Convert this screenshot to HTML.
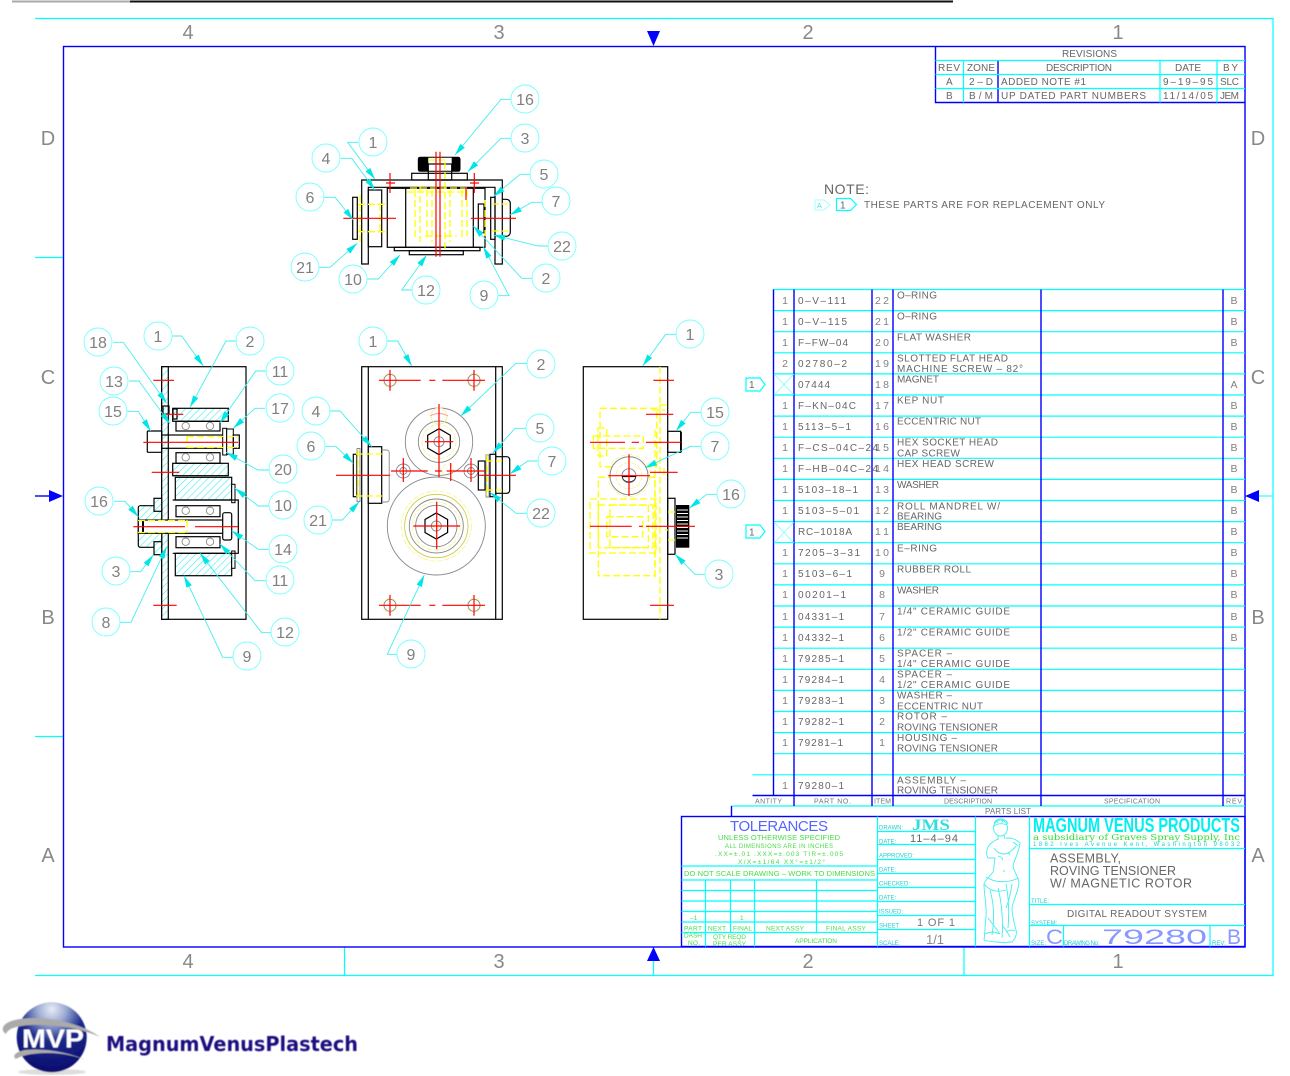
<!DOCTYPE html>
<html><head><meta charset="utf-8"><style>
html,body{margin:0;padding:0;background:#fff}
svg{display:block;font-family:"Liberation Sans",sans-serif}
.c{fill:none;stroke:#00ffff;stroke-width:1.2}
.bl{fill:none;stroke:#0000ff;stroke-width:1.4}
.k{fill:none;stroke:#000;stroke-width:1.2}
.kh{fill:url(#h);stroke:#000;stroke-width:1.2}
.g{fill:none;stroke:#888;stroke-width:.9}
.y{fill:none;stroke:#ffff00;stroke-width:1.3;stroke-dasharray:7 3}
.yc{fill:none;stroke:#f6f68a;stroke-width:.8;stroke-dasharray:5 2}
.r{fill:none;stroke:#ff0000;stroke-width:1.2}
.b{fill:#fff;stroke:#7ff;stroke-width:.9}
.l{fill:none;stroke:#44eeee;stroke-width:.9;marker-end:url(#a)}
.n{font-size:16px;fill:#808080;text-anchor:middle}
.z{font-size:20px;fill:#888;text-anchor:middle}
.t{font-size:10px;fill:#666}
.m{font-size:10.5px;fill:#808080;text-anchor:middle}
.s{font-size:8px;fill:#777}
.gr{font-size:6.5px;fill:#44dd44}
.cy{font-size:6px;fill:#22cccc}
</style></head><body>
<svg width="1290" height="1076" viewBox="0 0 1290 1076" xmlns="http://www.w3.org/2000/svg">
<defs>
<pattern id="h" width="5" height="5" patternUnits="userSpaceOnUse" patternTransform="rotate(45)"><rect width="5" height="5" fill="#fff"/><line x1="0" y1="0" x2="0" y2="5" stroke="#44eeee" stroke-width="1.2"/></pattern>
<marker id="a" markerUnits="userSpaceOnUse" markerWidth="13" markerHeight="7" refX="12" refY="3.5" orient="auto"><path d="M0 .5L12 3.500L0 6.500z" fill="#00e5e5"/></marker>
<radialGradient id="sp" cx=".5" cy=".1" r=".95"><stop offset="0" stop-color="#e8edf5"/><stop offset=".22" stop-color="#9aa9d2"/><stop offset=".48" stop-color="#1c2a8c"/><stop offset="1" stop-color="#08086a"/></radialGradient>
<filter id="bf"><feGaussianBlur stdDeviation=".6"/></filter>
</defs>

<rect x="12" y="0.5" width="118" height="2" fill="#aaa"/><rect x="130" y="0.5" width="823" height="2" fill="#111"/>

<path class="c" d="M35 18.500H1273V975.500H35M35 257.500H63.500M35 736.500H63.500M344.500 947V975.500M964 947V975.500M653.500 947V975.500"/>
<rect class="bl" x="63.500" y="46.500" width="1181.500" height="900.500"/>
<path d="M647 31h13l-6.500 15z" fill="#0000ff"/><path d="M647 961h13l-6.500-14z" fill="#0000ff"/>
<path d="M35 496H49" stroke="#0000ff" stroke-width="1.400"/><path d="M49 490v12l14-6z" fill="#0000ff"/>
<path d="M1245 496l14-6v12z" fill="#0000ff"/><path d="M1259 496H1273" stroke="#00ffff"/>

<g class="z">
<text x="188" y="39">4</text><text x="499" y="39">3</text><text x="808" y="39">2</text><text x="1118" y="39">1</text>
<text x="188" y="968">4</text><text x="499" y="968">3</text><text x="808" y="968">2</text><text x="1118" y="968">1</text>
<text x="48" y="145">D</text><text x="48" y="384">C</text><text x="48" y="624">B</text><text x="48" y="862">A</text>
<text x="1258" y="145">D</text><text x="1258" y="384">C</text><text x="1258" y="624">B</text><text x="1258" y="862">A</text>
</g>

<path class="bl" d="M935.500 46.500V102.500H1245M998 60.500V102.500"/>
<path class="c" d="M935.500 60.500H1245M935.500 74.500H1245M935.500 88.500H1245M963.500 60.500V102.500M1160 60.500V102.500M1217 60.500V102.500"/>
<g class="t" style="font-size:10px">
<text x="1062" y="57" textLength="55">REVISIONS</text>
<text x="938" y="71" textLength="22">REV</text><text x="967" y="71" textLength="28">ZONE</text><text x="1046" y="71" textLength="66">DESCRIPTION</text><text x="1175" y="71" textLength="26">DATE</text><text x="1223" y="71" textLength="15">BY</text>
<text x="946" y="85">A</text><text x="969" y="85" textLength="24">2–D</text><text x="1001" y="85" textLength="85">ADDED NOTE #1</text><text x="1163" y="85" textLength="50">9–19–95</text><text x="1220" y="85" textLength="19">SLC</text>
<text x="946" y="99">B</text><text x="969" y="99" textLength="24">B/M</text><text x="1001" y="99" textLength="145">UP DATED PART NUMBERS</text><text x="1163" y="99" textLength="50">11/14/05</text><text x="1220" y="99" textLength="19">JEM</text>
</g>

<text x="824" y="194" textLength="45" style="font-size:14px" fill="#666">NOTE:</text>
<path d="M815 200h9l6 5-6 5h-9z" fill="none" stroke="#8ff" stroke-width=".8"/><text x="817" y="208" style="font-size:7px" fill="#5dd">A</text>
<path class="c" d="M836.500 198.500h14l6 6-6 6h-14z"/><text x="840" y="208.500" class="t">1</text>
<text x="864" y="208" class="t" textLength="241">THESE PARTS ARE FOR REPLACEMENT ONLY</text>

<path class="c" d="M773 289.500H1245M773 310.600H1245M773 331.700H1245M773 352.800H1245M773 373.900H1245M773 395H1245M773 416.100H1245M773 437.200H1245M773 458.300H1245M773 479.400H1245M773 500.500H1245M773 521.600H1245M773 542.700H1245M773 563.800H1245M773 584.900H1245M773 606H1245M773 627.100H1245M773 648.200H1245M773 669.300H1245M773 690.400H1245M773 711.500H1245M773 732.600H1245M773 753.700H1245M752.500 774.800H1245M731.500 806H1245"/>
<path class="bl" d="M752.500 795.500H1245M773.500 289.500V795.500M794 289.500V806M872 289.500V806M893 289.500V806M1041 289.500V806M1223 289.500V806M731.500 806V816"/>
<path d="M774 374l20 21M794 374l-20 21M774 522l20 21M794 522l-20 21" stroke="#7ff" stroke-width=".8"/>
<path class="c" d="M746 378h14l5 6.500-5 6.500h-14zM746 525h14l5 6.500-5 6.500h-14z"/>
<text x="749" y="388" class="t">1</text><text x="749" y="535.500" class="t">1</text>

<g class="m">
<text x="785" y="304">1</text><text x="785" y="325">1</text><text x="785" y="346">1</text><text x="785" y="367">2</text><text x="785" y="409">1</text><text x="785" y="430">1</text><text x="785" y="451">1</text><text x="785" y="472">1</text><text x="785" y="493">1</text><text x="785" y="514">1</text><text x="785" y="556">1</text><text x="785" y="577">1</text><text x="785" y="598">1</text><text x="785" y="620">1</text><text x="785" y="641">1</text><text x="785" y="662">1</text><text x="785" y="683">1</text><text x="785" y="704">1</text><text x="785" y="725">1</text><text x="785" y="746">1</text><text x="785" y="789">1</text>
<text x="882" y="304" textLength="14">22</text><text x="882" y="325" textLength="14">21</text><text x="882" y="346" textLength="14">20</text><text x="882" y="367" textLength="14">19</text><text x="882" y="388" textLength="14">18</text><text x="882" y="409" textLength="14">17</text><text x="882" y="430" textLength="14">16</text><text x="882" y="451" textLength="14">15</text><text x="882" y="472" textLength="14">14</text><text x="882" y="493" textLength="14">13</text><text x="882" y="514" textLength="14">12</text><text x="882" y="535" textLength="14">11</text><text x="882" y="556" textLength="14">10</text><text x="882" y="577">9</text><text x="882" y="598">8</text><text x="882" y="620">7</text><text x="882" y="641">6</text><text x="882" y="662">5</text><text x="882" y="683">4</text><text x="882" y="704">3</text><text x="882" y="725">2</text><text x="882" y="746">1</text>
<text x="1234" y="304">B</text><text x="1234" y="325">B</text><text x="1234" y="346">B</text><text x="1234" y="388">A</text><text x="1234" y="409">B</text><text x="1234" y="430">B</text><text x="1234" y="451">B</text><text x="1234" y="472">B</text><text x="1234" y="493">B</text><text x="1234" y="514">B</text><text x="1234" y="535">B</text><text x="1234" y="556">B</text><text x="1234" y="577">B</text><text x="1234" y="598">B</text><text x="1234" y="620">B</text><text x="1234" y="641">B</text>
</g>
<g class="t">
<text x="798" y="304" textLength="48">0–V–111</text><text x="798" y="325" textLength="49">0–V–115</text><text x="798" y="346" textLength="50">F–FW–04</text><text x="798" y="367" textLength="49">02780–2</text><text x="798" y="388" textLength="32">07444</text><text x="798" y="409" textLength="58">F–KN–04C</text><text x="798" y="430" textLength="53">5113–5–1</text><text x="798" y="451" textLength="80">F–CS–04C–24</text><text x="798" y="472" textLength="80">F–HB–04C–24</text><text x="798" y="493" textLength="60">5103–18–1</text><text x="798" y="514" textLength="61">5103–5–01</text><text x="798" y="535" textLength="54">RC–1018A</text><text x="798" y="556" textLength="62">7205–3–31</text><text x="798" y="577" textLength="54">5103–6–1</text><text x="798" y="598" textLength="48">00201–1</text><text x="798" y="620" textLength="46">04331–1</text><text x="798" y="641" textLength="46">04332–1</text><text x="798" y="662" textLength="46">79285–1</text><text x="798" y="683" textLength="46">79284–1</text><text x="798" y="704" textLength="46">79283–1</text><text x="798" y="725" textLength="46">79282–1</text><text x="798" y="746" textLength="45">79281–1</text><text x="798" y="789" textLength="46">79280–1</text>
<text x="897" y="298.500" textLength="40">O–RING</text><text x="897" y="319.500" textLength="40">O–RING</text><text x="897" y="340.500" textLength="74">FLAT WASHER</text>
<text x="897" y="361.500" textLength="111">SLOTTED FLAT HEAD</text><text x="897" y="372" textLength="126">MACHINE SCREW – 82°</text>
<text x="897" y="382.500" textLength="42">MAGNET</text><text x="897" y="403.500" textLength="47">KEP NUT</text><text x="897" y="424.500" textLength="84">ECCENTRIC NUT</text>
<text x="897" y="445.500" textLength="101">HEX SOCKET HEAD</text><text x="897" y="456.500" textLength="63">CAP SCREW</text><text x="897" y="467" textLength="97">HEX HEAD SCREW</text>
<text x="897" y="488" textLength="42">WASHER</text><text x="897" y="509.500" textLength="103">ROLL MANDREL W/</text><text x="897" y="519.500" textLength="45">BEARING</text><text x="897" y="530" textLength="45">BEARING</text>
<text x="897" y="551.500" textLength="40">E–RING</text><text x="897" y="572.500" textLength="74">RUBBER ROLL</text><text x="897" y="593.500" textLength="42">WASHER</text>
<text x="897" y="614.500" textLength="113">1/4" CERAMIC GUIDE</text><text x="897" y="635.500" textLength="113">1/2" CERAMIC GUIDE</text>
<text x="897" y="656.500" textLength="55">SPACER –</text><text x="897" y="667" textLength="113">1/4" CERAMIC GUIDE</text>
<text x="897" y="677.500" textLength="55">SPACER –</text><text x="897" y="688" textLength="113">1/2" CERAMIC GUIDE</text>
<text x="897" y="698.500" textLength="55">WASHER –</text><text x="897" y="709.500" textLength="86">ECCENTRIC NUT</text>
<text x="897" y="719.500" textLength="50">ROTOR –</text><text x="897" y="730.500" textLength="101">ROVING TENSIONER</text>
<text x="897" y="741" textLength="60">HOUSING –</text><text x="897" y="751.500" textLength="101">ROVING TENSIONER</text>
<text x="897" y="783.500" textLength="69">ASSEMBLY –</text><text x="897" y="793.500" textLength="101">ROVING TENSIONER</text>
</g>
<g class="s">
<text x="755" y="803.500" textLength="27" style="font-size:7px">ANTITY</text><text x="814" y="803.500" textLength="37" style="font-size:7px">PART NO.</text><text x="874" y="803.500" textLength="17" style="font-size:7px">ITEM</text><text x="944" y="803.500" textLength="48" style="font-size:7px">DESCRIPTION</text><text x="1104" y="803.500" textLength="56" style="font-size:7px">SPECIFICATION</text><text x="1226" y="803.500" textLength="16" style="font-size:7px">REV</text>
<text x="985" y="814" textLength="46">PARTS LIST</text>
</g>

<rect class="bl" x="681.500" y="816.500" width="563.500" height="130"/>
<path class="c" d="M877.500 816.500V946.500M975.500 816.500V946.500M681.500 866H877.500M681.500 880H877.500M681.500 890.500H877.500M681.500 901H877.500M681.500 911.500H877.500M681.500 922H877.500M681.500 932.500H877.500M705.500 880V946.500M730.500 880V932.500M754.500 880V946.500M816.500 880V932.500M877.500 831.500H975.500M877.500 844.500H975.500M877.500 859.500H975.500M877.500 873.500H975.500M877.500 887.500H975.500M877.500 901.500H975.500M877.500 915.500H975.500M877.500 929.500H975.500M1029.500 816.500V946.500M1029.500 848.500H1245M1029.500 904.500H1245M1029.500 925.500H1245M1063.500 925.500V946.500M1210 925.500V946.500"/>
<text x="730" y="831" textLength="98" style="font-size:15px" fill="#5566ff">TOLERANCES</text>
<g class="gr">
<text x="718" y="840" textLength="122" style="font-size:7.500px">UNLESS OTHERWISE SPECIFIED</text>
<text x="725" y="848" textLength="108" style="font-size:6px">ALL DIMENSIONS ARE IN INCHES</text>
<text x="715" y="856" textLength="128" style="font-size:6.500px">.XX=±.01   .XXX=±.003   TIR=±.005</text>
<text x="738" y="864" textLength="87" style="font-size:6.500px">X/X=±1/64   XX°=±1/2°</text>
<text x="684" y="876" textLength="191" style="font-size:7.500px">DO NOT SCALE DRAWING – WORK TO DIMENSIONS</text>
<text x="690" y="920">–1</text><text x="740" y="920">1</text>
<text x="684" y="930.500" textLength="18">PART</text><text x="708" y="930.500" textLength="18">NEXT</text><text x="733" y="930.500" textLength="19">FINAL</text><text x="766" y="930.500" textLength="38">NEXT ASSY</text><text x="826" y="930.500" textLength="40">FINAL ASSY</text>
<text x="684" y="937.500" textLength="18">DASH</text><text x="688" y="945" textLength="12">NO.</text>
<text x="713" y="939" textLength="33">QTY REQD</text><text x="713" y="946" textLength="33">PER ASSY</text><text x="795" y="943" textLength="42">APPLICATION</text>
</g>
<g class="cy">
<text x="879" y="829.500">DRAWN:</text><text x="879" y="843.500">DATE:</text><text x="879" y="857.500">APPROVED:</text><text x="879" y="871.500">DATE:</text><text x="879" y="885.500">CHECKED:</text><text x="879" y="899.500">DATE:</text><text x="879" y="913.500">ISSUED:</text><text x="879" y="927.500">SHEET</text><text x="879" y="945">SCALE:</text>
<text x="1031" y="903">TITLE:</text><text x="1031" y="925">SYSTEM:</text><text x="1031" y="945">SIZE:</text><text x="1064" y="945" textLength="35">DRAWING No:</text><text x="1212" y="945">REV:</text>
</g>
<text x="912" y="830" textLength="38" lengthAdjust="spacingAndGlyphs" style="font-size:16px;font-family:'Liberation Serif',serif;font-weight:bold" fill="#33dddd">JMS</text>
<text x="910" y="842" textLength="48" style="font-size:11px" fill="#666">11–4–94</text>
<text x="917" y="926" textLength="38" style="font-size:11px" fill="#777">1 OF 1</text>
<text x="926" y="944" textLength="18" style="font-size:13px" fill="#888">1/1</text>
<text x="1033" y="832" textLength="207" lengthAdjust="spacingAndGlyphs" style="font-size:20px;font-weight:bold" fill="#00f0f0">MAGNUM VENUS PRODUCTS</text>
<text x="1033" y="840" textLength="207" lengthAdjust="spacingAndGlyphs" style="font-size:8px;font-family:'DejaVu Serif',serif" fill="#33dd33">a subsidiary of Graves Spray Supply, Inc</text>
<text x="1033" y="846" textLength="207" style="font-size:6px" fill="#22cccc">1882 Ives Avenue  Kent, Washington  98032</text>
<g style="font-size:12.500px" fill="#666">
<text x="1050" y="862.500" textLength="71">ASSEMBLY,</text><text x="1050" y="875" textLength="126">ROVING TENSIONER</text><text x="1050" y="887.500" textLength="142">W/ MAGNETIC ROTOR</text>
</g>
<text x="1067" y="917" textLength="140" style="font-size:10px" fill="#666">DIGITAL READOUT SYSTEM</text>
<g style="font-size:21px" fill="#8899ff">
<text x="1046" y="944" textLength="17" lengthAdjust="spacingAndGlyphs">C</text><text x="1102" y="944" textLength="105" lengthAdjust="spacingAndGlyphs">79280</text><text x="1227" y="944" textLength="14" lengthAdjust="spacingAndGlyphs">B</text>
</g>

<g fill="none" stroke="#44eeee" stroke-width=".9">
<ellipse cx="1000.500" cy="828" rx="7" ry="8"/><path d="M994 823q3-5 8-4t6 5M994 826q6-4 13-1M996 820l2 3M1003 819l-1 4M998 836l0 4M1004 835l1 4"/>
<path d="M998 839C992 842 988 845 987 850C986 854 987 856 988 858L995 858C994 864 994 869 993 872C990 876 985 880 984 884C984 895 987 905 986 917C985 925 985 933 984 940C990 942 1005 943 1012 942C1016 938 1017 933 1016 930C1014 922 1012 916 1012 908C1014 898 1018 892 1019 883C1018 876 1014 872 1013 866C1015 858 1019 852 1020 843C1015 838 1010 838 1006 838"/>
<path d="M986 877q14 9 33 1M984 884q8 10 22 6M990 890q6 20 2 45M998 888q6 24 4 50M1006 884q4 20 2 44M1012 884q-2 14-6 24M988 918l12 16M1002 925q5 6 8 12M994 848q4 6 10 6t12-8M998 856q6 2 4 4M1008 852l2 3M1003 871h2M1013 842l5 4M985 934q8-4 14 0M1006 932q4-3 9-1"/>
</g>

<!-- TOP VIEW -->
<g>
<path class="k" d="M361.700 264V180H502.300V264H495V187.300H368.300V264Z"/>
<rect class="k" x="368.300" y="190" width="13.400" height="56.700"/>
<rect class="k" x="352.700" y="197.300" width="4.600" height="42"/>
<rect class="k" x="387.300" y="188.300" width="97.700" height="59"/><path class="k" d="M405.700 188.300V247.300M473.300 188.300V247.300"/>
<rect class="k" x="394.300" y="247.300" width="85.700" height="3.400"/><rect class="k" x="409.300" y="250.700" width="54" height="4"/>
<rect x="418.300" y="157.300" width="41.700" height="14" rx="2" fill="#fff" stroke="#000"/><rect x="418.300" y="157.300" width="10" height="14" fill="#000"/><rect x="451.700" y="157.300" width="8.300" height="14" fill="#000"/>
<rect class="k" x="411.700" y="173.300" width="55.600" height="6.700"/><rect class="k" x="428.300" y="164" width="23.400" height="16"/>
<rect class="k" x="478.300" y="204" width="5.700" height="28.700"/><rect class="k" x="490.700" y="197.300" width="4.300" height="42"/>
<path class="k" d="M502.300 199.300h4a4 4 0 0 1 4 4v29a4 4 0 0 1-4 4h-4"/>
<path class="y" d="M358 204.300H388M358 231.700H388M360 195V243M415 190V240M420 186V242M432 190V242M445 162V252M450 190V242M462 190V238M427 190V240M410 188h58M428 160h20M407 192h58M425 236h32M492 204h16M492 231h16M485 200v36M467 190V236M380 204v28"/>
<path class="r" d="M343.300 218.300H396M471 218.300H516M436 151.700V256.700M440 151.700V256.700M390 173V193M474.300 173V193M466 187V200M386 183H395M470 183H479"/>
</g>

<!-- SIDE VIEW -->
<g>
<rect class="k" x="161.700" y="366.700" width="84.300" height="252.600"/>
<rect class="kh" x="161.700" y="366.700" width="6.600" height="252.600"/>
<rect class="kh" x="172.700" y="408.300" width="55.600" height="13"/><rect class="kh" x="172.700" y="463.300" width="55.600" height="12.400"/>
<rect class="k" x="176" y="421.300" width="44" height="9.700" fill="#fff"/><rect class="k" x="176" y="452.700" width="44" height="10.600" fill="#fff"/>
<rect class="k" x="147.300" y="431" width="14.400" height="21.300" rx="1" fill="#fff"/><rect class="k" x="161.700" y="435" width="61.600" height="13.300"/>
<rect x="222.700" y="428.300" width="4" height="26.700" fill="#fff" stroke="#000"/><rect x="226.700" y="429" width="6.600" height="25.300" fill="#fff" stroke="#000"/><rect class="k" x="233.300" y="435" width="6" height="13.300"/>
<circle class="g" cx="185.700" cy="426" r="3.700"/><circle class="g" cx="210" cy="426" r="3.700"/><circle class="g" cx="185.700" cy="457.300" r="3.700"/><circle class="g" cx="210" cy="457.300" r="3.700"/>
<rect class="kh" x="175.300" y="477.300" width="56.400" height="22.700"/><rect class="kh" x="175.300" y="553.300" width="56.400" height="22.400"/>
<rect x="231.700" y="484.300" width="3.300" height="18.400" fill="#fff" stroke="#000"/><rect x="231.700" y="551" width="3.300" height="17.300" fill="#fff" stroke="#000"/>
<path class="k" d="M172.700 500H238.300V553.300H172.700"/>
<rect class="k" x="176" y="505.700" width="44" height="11"/><rect class="k" x="176" y="536.700" width="44" height="11"/>
<circle class="g" cx="185.700" cy="510.700" r="3.700"/><circle class="g" cx="210" cy="510.700" r="3.700"/><circle class="g" cx="185.700" cy="541.700" r="3.700"/><circle class="g" cx="210" cy="541.700" r="3.700"/>
<rect class="kh" x="138.300" y="505.700" width="23.400" height="41.600" rx="2"/><rect class="kh" x="154" y="498.300" width="7.700" height="13"/><rect class="kh" x="154" y="541.700" width="7.700" height="13"/>
<rect x="138.300" y="520" width="88.400" height="13.300" fill="#fff" stroke="#000" stroke-width="1.200"/><rect x="222.700" y="512.700" width="9" height="27.300" rx="2" fill="#fff" stroke="#000" stroke-width="1.200"/>
<rect x="142" y="520" width="2" height="13" fill="#000"/>
<rect class="k" x="163" y="406" width="6" height="8" fill="#fff"/><rect class="k" x="173" y="409" width="4" height="10"/>
<path class="y" d="M187 436.500H238M187 447.500H238M138 520.500H187M138 532.500H187M187 436V448M187 520V533"/>
<path class="r" d="M143.300 442.300H238M133.300 526.700H185M195 526.700H238M153.300 380.300H174M151.700 472.300H179.300M153.300 605.300H176.700M161.700 414.300H183.300"/>
</g>

<!-- FRONT VIEW -->
<g>
<rect class="k" x="361.700" y="366.700" width="140.600" height="252.600"/><path class="k" d="M368.300 366.700V619.300M495.700 366.700V619.300"/>
<circle class="g" cx="439" cy="441.700" r="33.700"/><circle class="g" cx="439" cy="441.700" r="20.700"/><circle class="yc" cx="439" cy="441.700" r="17"/><circle class="g" cx="439" cy="441.700" r="5"/>
<path class="k" d="M439 428.700l11.300 6.500v13l-11.300 6.500-11.300-6.500v-13z"/>
<circle cx="439" cy="416" r="8" fill="none" stroke="#f3f3a0"/><path d="M430 416q9-5 18 0" fill="none" stroke="#f99" stroke-width=".9"/>
<circle cx="436.300" cy="526" r="49" fill="#fff" stroke="#888" stroke-width=".9"/><circle cx="436.300" cy="526" r="31.700" fill="none" stroke="#cc3" stroke-width=".8"/><circle class="g" cx="436.300" cy="526" r="27"/><circle class="g" cx="436.300" cy="526" r="20.700"/><circle class="yc" cx="436.300" cy="526" r="24"/><circle class="yc" cx="436.300" cy="526" r="35"/><circle class="g" cx="436.300" cy="526" r="5"/><circle class="yc" cx="436.300" cy="526" r="3"/>
<path class="k" d="M436.300 513l11.300 6.500v13l-11.300 6.500-11.300-6.500v-13z"/>
<g class="g"><circle cx="390" cy="380.300" r="6"/><circle cx="474" cy="380.300" r="6"/><circle cx="390" cy="605.300" r="6"/><circle cx="474" cy="605.300" r="6"/><circle cx="403.300" cy="471" r="7"/><circle cx="403.300" cy="471" r="3.500"/><circle cx="471" cy="471" r="7"/><circle cx="471" cy="471" r="3.500"/></g>
<circle class="yc" cx="390" cy="380.300" r="7"/><circle class="yc" cx="474" cy="380.300" r="7"/><circle class="yc" cx="390" cy="605.300" r="7"/><circle class="yc" cx="474" cy="605.300" r="7"/><circle class="yc" cx="448" cy="470" r="6"/>
<rect x="368.300" y="446.700" width="13.400" height="56.600" fill="#fff" stroke="#000" stroke-width="1.200"/>
<rect class="k" x="353.300" y="454.300" width="3.400" height="42.400"/>
<path class="g" d="M357 448.500h3v53h-3zM381.700 450h5a2.500 2.500 0 0 1 2.500 2.500v47a2.500 2.500 0 0 1-2.500 2.500h-5"/>
<rect x="478.300" y="461" width="6.700" height="29" fill="#fff" stroke="#000" stroke-width="1.200"/>
<rect x="490" y="454.300" width="5.700" height="42.400" fill="#fff" stroke="#000" stroke-width="1.200"/>
<path class="k" d="M495.700 456.700h11a3 3 0 0 1 3 3v30.600a3 3 0 0 1-3 3h-11"/>
<path class="g" d="M486 455h3v42h-3z"/>
<path class="y" d="M356 454H382M356 496H382M358 450V500M486 461H502M486 490H502M487 455V496"/>
<path class="r" d="M336 475.300H390M478.300 475.300H516M379 380.300H420.700M429.300 380.300H435.300M442.300 380.300H485M379 605.300H420.700M429.300 605.300H435.300M442.300 605.300H485M391 471H427.700M435 471H441.700M446.700 471H485M439 404V477.300M425 441.700H453.300M436.700 501.700V549.300M413.300 526H460M390 370V390.700M474 370V390.700M390 595V615.700M474 595V615.700M403.300 458V482M471 458V482M450.700 463V481"/>
</g>

<!-- RIGHT VIEW -->
<g>
<rect class="k" x="583.300" y="366.700" width="84.400" height="252.600"/>
<rect class="k" x="667.700" y="431.300" width="13" height="21"/><path d="M681 432V452" stroke="#000" stroke-width="1.800"/>
<rect class="k" x="667.700" y="498.300" width="7.300" height="56"/>
<rect x="676" y="505" width="13.300" height="42.700" fill="#000"/>
<path d="M677 510H688M677 513.500H688M677 517H688M677 520.500H688M677 524H688M677 527.500H688M677 531H688M677 534.500H688M677 538H688" stroke="#fff" stroke-width="1"/>
<rect class="y" x="600" y="408.300" width="56.700" height="58.400"/><rect class="y" x="593.300" y="436" width="50" height="12.300"/><rect class="y" x="598" y="428" width="8.700" height="28"/>
<rect class="y" x="598.300" y="477.300" width="56.700" height="98.400"/><rect class="y" x="590" y="499" width="66" height="54"/><rect class="y" x="610" y="505" width="43" height="42.700"/><rect class="y" x="598.300" y="505" width="50" height="42.700"/><rect class="y" x="606.700" y="516.700" width="36" height="20"/>
<path class="y" d="M660 366.700V619.300M655 430V580M652 410H665M660 405H668M660 405V425M664 468v10M668 512H676M668 540H676M665 530H668"/>
<circle cx="629" cy="475.700" r="19" fill="#fff" stroke="#888"/><circle class="yc" cx="629" cy="475.700" r="21"/><circle class="yc" cx="629" cy="475.700" r="13"/><circle class="g" cx="629" cy="475.700" r="7"/>
<path d="M622 476.500h14" stroke="#000" stroke-width="1.200"/><path d="M622.500 477a6.500 5 0 0 0 13 0" fill="none" stroke="#333" stroke-width=".9"/>
<path class="r" d="M590 442.300H625M631.700 442.300H639M646 442.300H680.700M590 526.300H631.700M639 526.300H642.700M646 526.300H695M653.300 380.300H674M646 414.300H673.300M650 472.300H677.700M650 605.300H674M629 454.300V496M608.300 475.700H650"/>
</g>

<g>
<polyline class="l" points="511.700,99.300 501,99.300 455,155"/><polyline class="l" points="511.700,138.300 501,138.300 467.700,171.700"/><polyline class="l" points="358.300,142.300 347.700,142.300 375,179.300"/><polyline class="l" points="340.700,158.300 351.700,158.300 375,190"/><polyline class="l" points="531,174.300 520,174.300 493.300,196.700"/><polyline class="l" points="324.300,197.300 335,197.300 353.300,220"/><polyline class="l" points="542.300,202.300 531.700,202.300 510,215"/><polyline class="l" points="548.300,246 538.300,246 493.300,235"/><polyline class="l" points="319.300,267.300 330,267.300 357.300,243.300"/><polyline class="l" points="367.300,279 378.300,279 400,255"/><polyline class="l" points="412.300,290 401.700,290 426.700,255"/><polyline class="l" points="532.700,278.300 521.700,278.300 473.300,226"/><polyline class="l" points="498.300,295.700 509,295.700 483.300,246.700"/>
<polyline class="l" points="113.300,342.300 123.300,342.300 166.700,403.300"/><polyline class="l" points="171.700,336 181.700,336 203.300,366"/><polyline class="l" points="236.700,341 226,341 190,407.300"/><polyline class="l" points="129,381 139,381 170,424"/><polyline class="l" points="266.700,371 255.700,371 220,422.700"/><polyline class="l" points="127.300,411.300 138.300,411.300 150.700,431"/><polyline class="l" points="265,408.300 255,408.300 233.300,428.300"/><polyline class="l" points="269,470 257.700,470 226,452.300"/><polyline class="l" points="114.300,501.300 125,501.300 138.300,516.700"/><polyline class="l" points="269,506 258.300,506 235,488.300"/><polyline class="l" points="269,549.300 258.300,549.300 231.700,530.700"/><polyline class="l" points="129.300,571.700 140.700,571.700 153.300,555"/><polyline class="l" points="265.700,580.700 255,580.700 220,544"/><polyline class="l" points="120,622.300 131,622.300 166.700,546.700"/><polyline class="l" points="271.700,632.700 261.700,632.700 200,553.300"/><polyline class="l" points="233.300,657.300 222.700,657.300 184,575.700"/>
<polyline class="l" points="386.700,341 397.700,341 411.700,366"/><polyline class="l" points="527.300,363.300 516,363.300 460.700,416"/><polyline class="l" points="329,411 340,411 371.700,446.700"/><polyline class="l" points="525.700,428.300 515,428.300 492.700,453.300"/><polyline class="l" points="325,446.300 335.700,446.300 353.300,463.300"/><polyline class="l" points="539,461 527.700,461 510,474"/><polyline class="l" points="527.300,513.300 516,513.300 490,492.300"/><polyline class="l" points="331,520 342.300,520 359.300,501.700"/><polyline class="l" points="397.700,654.300 387.300,654.300 424.300,575"/>
<polyline class="l" points="676.700,334.300 665.700,334.300 642.700,366"/><polyline class="l" points="701.700,412.300 690.700,412.300 676,431"/><polyline class="l" points="701.700,446.300 690.700,446.300 645,467.700"/><polyline class="l" points="717.700,494.300 706.700,494.300 689.300,508.300"/><polyline class="l" points="705.700,574.300 695,574.300 675,554.300"/>
</g>

<g class="b">
<circle cx="525" cy="99" r="14"/><circle cx="525" cy="138" r="14"/><circle cx="373" cy="142" r="14"/><circle cx="326" cy="158" r="14"/><circle cx="544" cy="174" r="14"/><circle cx="310" cy="197" r="14"/><circle cx="556" cy="201" r="14"/><circle cx="562" cy="246" r="14"/><circle cx="305" cy="267" r="14"/><circle cx="353" cy="279" r="14"/><circle cx="426" cy="290" r="14"/><circle cx="546" cy="278" r="14"/><circle cx="484" cy="295" r="14"/>
<circle cx="98" cy="342" r="14"/><circle cx="158" cy="336" r="14"/><circle cx="250" cy="341" r="14"/><circle cx="114" cy="381" r="14"/><circle cx="280" cy="371" r="14"/><circle cx="113" cy="411" r="14"/><circle cx="280" cy="408" r="14"/><circle cx="283" cy="469" r="14"/><circle cx="99" cy="501" r="14"/><circle cx="283" cy="505" r="14"/><circle cx="283" cy="549" r="14"/><circle cx="116" cy="571" r="14"/><circle cx="280" cy="580" r="14"/><circle cx="106" cy="622" r="14"/><circle cx="285" cy="632" r="14"/><circle cx="247" cy="656" r="14"/>
<circle cx="373" cy="341" r="14"/><circle cx="541" cy="364" r="14"/><circle cx="316" cy="411" r="14"/><circle cx="540" cy="428" r="14"/><circle cx="311" cy="446" r="14"/><circle cx="552" cy="461" r="14"/><circle cx="541" cy="513" r="14"/><circle cx="318" cy="520" r="14"/><circle cx="411" cy="654" r="14"/>
<circle cx="690" cy="334" r="14"/><circle cx="715" cy="412" r="14"/><circle cx="715" cy="446" r="14"/><circle cx="731" cy="494" r="14"/><circle cx="719" cy="574" r="14"/>
</g>
<g class="n">
<text x="525" y="105">16</text><text x="525" y="144">3</text><text x="373" y="148">1</text><text x="326" y="164">4</text><text x="544" y="180">5</text><text x="310" y="203">6</text><text x="556" y="207">7</text><text x="562" y="252">22</text><text x="305" y="273">21</text><text x="353" y="285">10</text><text x="426" y="296">12</text><text x="546" y="284">2</text><text x="484" y="301">9</text>
<text x="98" y="348">18</text><text x="158" y="342">1</text><text x="250" y="347">2</text><text x="114" y="387">13</text><text x="280" y="377">11</text><text x="113" y="417">15</text><text x="280" y="414">17</text><text x="283" y="475">20</text><text x="99" y="507">16</text><text x="283" y="511">10</text><text x="283" y="555">14</text><text x="116" y="577">3</text><text x="280" y="586">11</text><text x="106" y="628">8</text><text x="285" y="638">12</text><text x="247" y="662">9</text>
<text x="373" y="347">1</text><text x="541" y="370">2</text><text x="316" y="417">4</text><text x="540" y="434">5</text><text x="311" y="452">6</text><text x="552" y="467">7</text><text x="541" y="519">22</text><text x="318" y="526">21</text><text x="411" y="660">9</text>
<text x="690" y="340">1</text><text x="715" y="418">15</text><text x="715" y="452">7</text><text x="731" y="500">16</text><text x="719" y="580">3</text>
</g>

<g filter="url(#bf)">
<ellipse cx="52" cy="1072" rx="34" ry="3" fill="#ddd"/>
<circle cx="51.700" cy="1037.300" r="35" fill="url(#sp)"/>
<path d="M100 1037C80 1022 40 1014 15 1020C2 1023 0 1030 6 1034C8 1028 18 1026 30 1025C55 1024 80 1028 100 1037Z" fill="#aaa"/>
<path d="M90 1062C70 1052 45 1048 25 1050C15 1052 12 1056 16 1059C22 1055 35 1053 48 1053C62 1053 78 1056 90 1062Z" fill="#aaa"/>
<text x="22" y="1047.500" textLength="62" lengthAdjust="spacingAndGlyphs" style="font-size:26px;font-weight:bold" fill="#fff">MVP</text>
</g>
<text x="106" y="1051" textLength="252" lengthAdjust="spacingAndGlyphs" filter="url(#bf)" style="font-size:20px;font-weight:bold;font-family:'DejaVu Sans',sans-serif" fill="#1a0f80">MagnumVenusPlastech</text>
</svg>
</body></html>
